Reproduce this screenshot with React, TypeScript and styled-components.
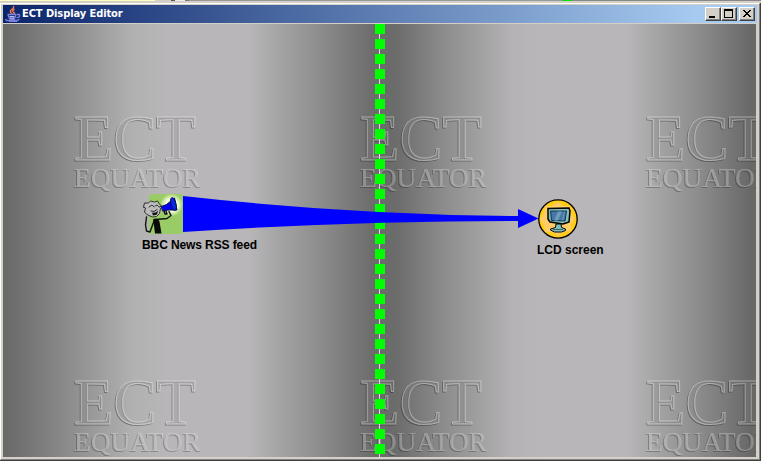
import React from 'react';
import styled, { createGlobalStyle } from 'styled-components';

const Global = createGlobalStyle`
  * { box-sizing: border-box; }
  body { margin: 0; overflow: hidden; background: #d4d0c8; }
`;
const Page = styled.div`
  width: 761px; height: 461px; display: flex; flex-direction: column;
  background: #404040;
`;
const Backdrop = styled.div`
  height: 3px; flex: none; display: flex; border-bottom: 1px solid #d4d0c8;
`;
const Strip = styled.div<{ $w: number; $c: string }>`
  width: ${p => p.$w}px; background: ${p => p.$c}; border-bottom: 1px solid #d4d0c8;
`;
const Window = styled.div`
  width: 760px; height: 457px; flex: none; display: flex; flex-direction: column;
  background: #d4d0c8; border: 1px solid; border-color: #fff #808080 #808080 #fff;
  padding: 1px 1px 0 2px;
`;
const TitleBar = styled.header`
  height: 18px; width: 754px; flex: none; display: flex; align-items: center;
  padding: 0 2px; background: linear-gradient(90deg, #0a246a, #a6caf0 92%);
`;
const Title = styled.h1`
  margin: 0 auto 0 1px; color: #fff; white-space: nowrap;
  font: bold 11px/18px "DejaVu Sans Condensed", "DejaVu Sans", sans-serif;
  letter-spacing: -0.08px;
`;
const WinButton = styled.button<{ $gap?: boolean }>`
  width: 16px; height: 14px; padding: 0; margin-left: ${p => (p.$gap ? 2 : 0)}px;
  border: 1px solid; border-color: #fff #404040 #404040 #fff;
  box-shadow: inset -1px -1px #808080; background: #d4d0c8; display: flex;
`;
const Canvas = styled.main`
  position: relative; width: 753px; height: 433px; margin-top: 1px; overflow: hidden;
  background: linear-gradient(90deg, #696969 0, #6d6d6d 10px, #8a8a8a 62px, #b2b1b2 130px, #b8b6b8 165px, #b8b6b8 245px, #8e8e8e 315px, #6c6c6c 370px, #6b6b6b 392px, #8e8e8e 444px, #b4b2b4 508px, #b8b6b8 535px, #b8b6b8 623px, #8e8e8e 693px, #686868 748px);
`;
const Scene = styled.svg`
  position: absolute; inset: 0; display: block;
`;
const Node = styled.div<{ $x: number; $y: number }>`
  position: absolute; left: ${p => p.$x}px; top: ${p => p.$y}px;
  display: flex; flex-direction: column; align-items: flex-start;
`;
const Label = styled.span<{ $gap: number; $indent: number }>`
  margin: ${p => p.$gap}px 0 0 ${p => p.$indent}px; white-space: nowrap; color: #000;
  font: bold 12px/14px "Liberation Sans", Arial, sans-serif;
  letter-spacing: ${p => (p.$indent ? 0 : -0.1)}px;
`;
const Mark = styled.g`
  opacity: 0.38;
  filter: drop-shadow(-1px 1px 0.7px rgba(0, 0, 0, 0.8));
`;
const MarkText = styled.text<{ $solid?: boolean }>`
  font-family: "Liberation Serif", "Times New Roman", serif;
  fill: ${p => (p.$solid ? '#e8e8e8' : '#c4c4c4')};
  fill-opacity: ${p => (p.$solid ? 0.8 : 0.4)};
  stroke: #f4f4f4;
  stroke-width: ${p => (p.$solid ? 0.1 : 1)};
`;

const Watermark = ({ x, y }: { x: number; y: number }) => (
  <Mark>
    <MarkText x={x} y={y + 45} fontSize="66" textLength="122" lengthAdjust="spacingAndGlyphs">ECT</MarkText>
    <MarkText $solid x={x} y={y + 72} fontSize="28" textLength="127" lengthAdjust="spacingAndGlyphs">EQUATOR</MarkText>
  </Mark>
);

const JavaCup = () => (
  <svg width="16" height="16" viewBox="0 0 16 16" fill="none">
    <path d="M8.5 0v2L5.5 4.5v2l2 1.5M9.5 3L7.5 5l2 2-1 1" stroke="#f07850" strokeWidth="1.4" />
    <path d="M2.5 8.5h9M3 9l1.5 3.5h5L11 9M12 8.5h2.5v2L11.5 12M5 13h5M0.5 13l1 1.5h11l2-1.5M4 15.5h8" stroke="#7c80dc" strokeWidth="1.3" />
    <path d="M4.5 10.5h5M5 12h4" stroke="#b9bdf0" />
  </svg>
);

const Megaphone = () => (
  <svg width="42" height="42" viewBox="0 0 42 42" fill="none" strokeLinecap="round" strokeLinejoin="round">
    <defs>
      <radialGradient id="glow"><stop offset=".55" stopColor="#f7ffd8" /><stop offset="1" stopColor="#99cc66" /></radialGradient>
    </defs>
    <rect x="7" y="1" width="34" height="40" rx="2.5" fill="#99cc66" />
    <circle cx="29.5" cy="12" r="11.5" fill="url(#glow)" />
    <path d="M2 12l4-3 6-1 5 3 3 4-1 5-4 3-6 0-4-3-2-4z" fill="#bcbcbc" />
    <path d="M1.5 14l1-4 4 0 2-2 4 1 3-1 2 3 2 2-2 1M1.5 14l2 1-1 4 3 3 5 2 4-.5 3-3 1-5M7 14l3-2 2 2M13 13l2-1 2 2M9 18l3 .5 3-2" stroke="#222" strokeWidth=".9" />
    <path d="M10 19.500q4 1 6-2l-1 4-4 1z" fill="#111" />
    <path d="M19.500 13.500l5-2 8-6.500 2.500 12-9 0-5 1z" fill="#0000f5" stroke="#071064" />
    <ellipse cx="31.500" cy="11" rx="2.400" ry="6.500" transform="rotate(-14 31.500 11)" fill="#0829dc" stroke="#061065" />
    <path d="M22 18l1 3 2 0-1-3M27 18.500l2 4-4 3-11 1M4.500 24l-1 8 1 6 3.500 1 4-11" stroke="#111" strokeWidth="1.400" />
    <path d="M11 26.500q4-3 6.500 2l2 12h-6.500l-1-8z" fill="#090909" />
  </svg>
);

const Monitor = () => (
  <svg width="40" height="40" viewBox="0 0 40 40">
    <circle cx="20" cy="20" r="19.2" fill="#ffcc16" stroke="#000" strokeWidth="1.3" />
    <path d="M20 3l5 4 7 0 1 7 4 6-4 5 0 7-7 1-6 4-6-4-7 0-1-7-4-6 4-6 1-7 7 0z" fill="#ffcc66" />
    <path d="M10 9.500l21-.5 1 3-1 11-3 1-3 1-13-2-2-3z" fill="#80c1bd" stroke="#000" strokeWidth="1.500" />
    <path d="M12.500 12h16l-1.500 10-13.500-.5z" fill="#4776aa" stroke="#071b26" strokeWidth=".8" />
    <path d="M20 12.500h4l-4 9h-4zM26 12.500h1l-2 9h-1z" fill="#6c9dbc" />
    <path d="M18 25h5l.5 3.500 4 1.500v1.500l-4 1.500h-7l-4-2v-1l5-1.500z" fill="#80c1bd" stroke="#000" />
    <path d="M15 30.500h10" stroke="#38635f" />
  </svg>
);

export default function App() {
  return (
    <>
      <Global />
      <Page>
        <Backdrop>
          <Strip $w={155} $c="#ffffc0" /><Strip $w={16} $c="#d4d0c8" /><Strip $w={4} $c="#555" />
          <Strip $w={10} $c="#eee" /><Strip $w={4} $c="#777" /><Strip $w={373} $c="#999" />
          <Strip $w={10} $c="#00e000" /><Strip $w={189} $c="#888" />
        </Backdrop>
        <Window>
          <TitleBar>
            <JavaCup />
            <Title>ECT Display Editor</Title>
            <WinButton aria-label="Minimize"><svg width="14" height="12" shapeRendering="crispEdges"><path d="M3 8h6v2H3z" /></svg></WinButton>
            <WinButton aria-label="Maximize"><svg width="14" height="12" shapeRendering="crispEdges"><path d="M2 1h9v9H2zM3 3v6h7V3z" fillRule="evenodd" /></svg></WinButton>
            <WinButton $gap aria-label="Close"><svg width="14" height="12" shapeRendering="crispEdges"><path d="M3 2h2v1h1v1h2V3h1V2h2v1h-1v1H9v1H8v1h1v1h1v1h1v1H9V8H8V7H6v1H5v1H3V8h1V7h1V6h1V5H5V4H4V3H3z" /></svg></WinButton>
          </TitleBar>
          <Canvas>
            <Scene width="753" height="433">
              {[91, 355].map(y => [71, 357, 643].map(x => <Watermark key={`${x}-${y}`} x={x} y={y} />))}
              <path d="M376.5 0v433" stroke="#d8d8d8" />
              <path d="M377 0v433" stroke="#0f0" strokeWidth="10" strokeDasharray="10 5" />
              <path d="M180 172Q350 191 515 192V185L535.5 194.500 515 204V197Q350 197 180 208z" fill="#00f" />
            </Scene>
            <Node $x={139} $y={169}><Megaphone /><Label $gap={3} $indent={0}>BBC News RSS feed</Label></Node>
            <Node $x={535} $y={175}><Monitor /><Label $gap={4} $indent={-1}>LCD screen</Label></Node>
          </Canvas>
        </Window>
      </Page>
    </>
  );
}
